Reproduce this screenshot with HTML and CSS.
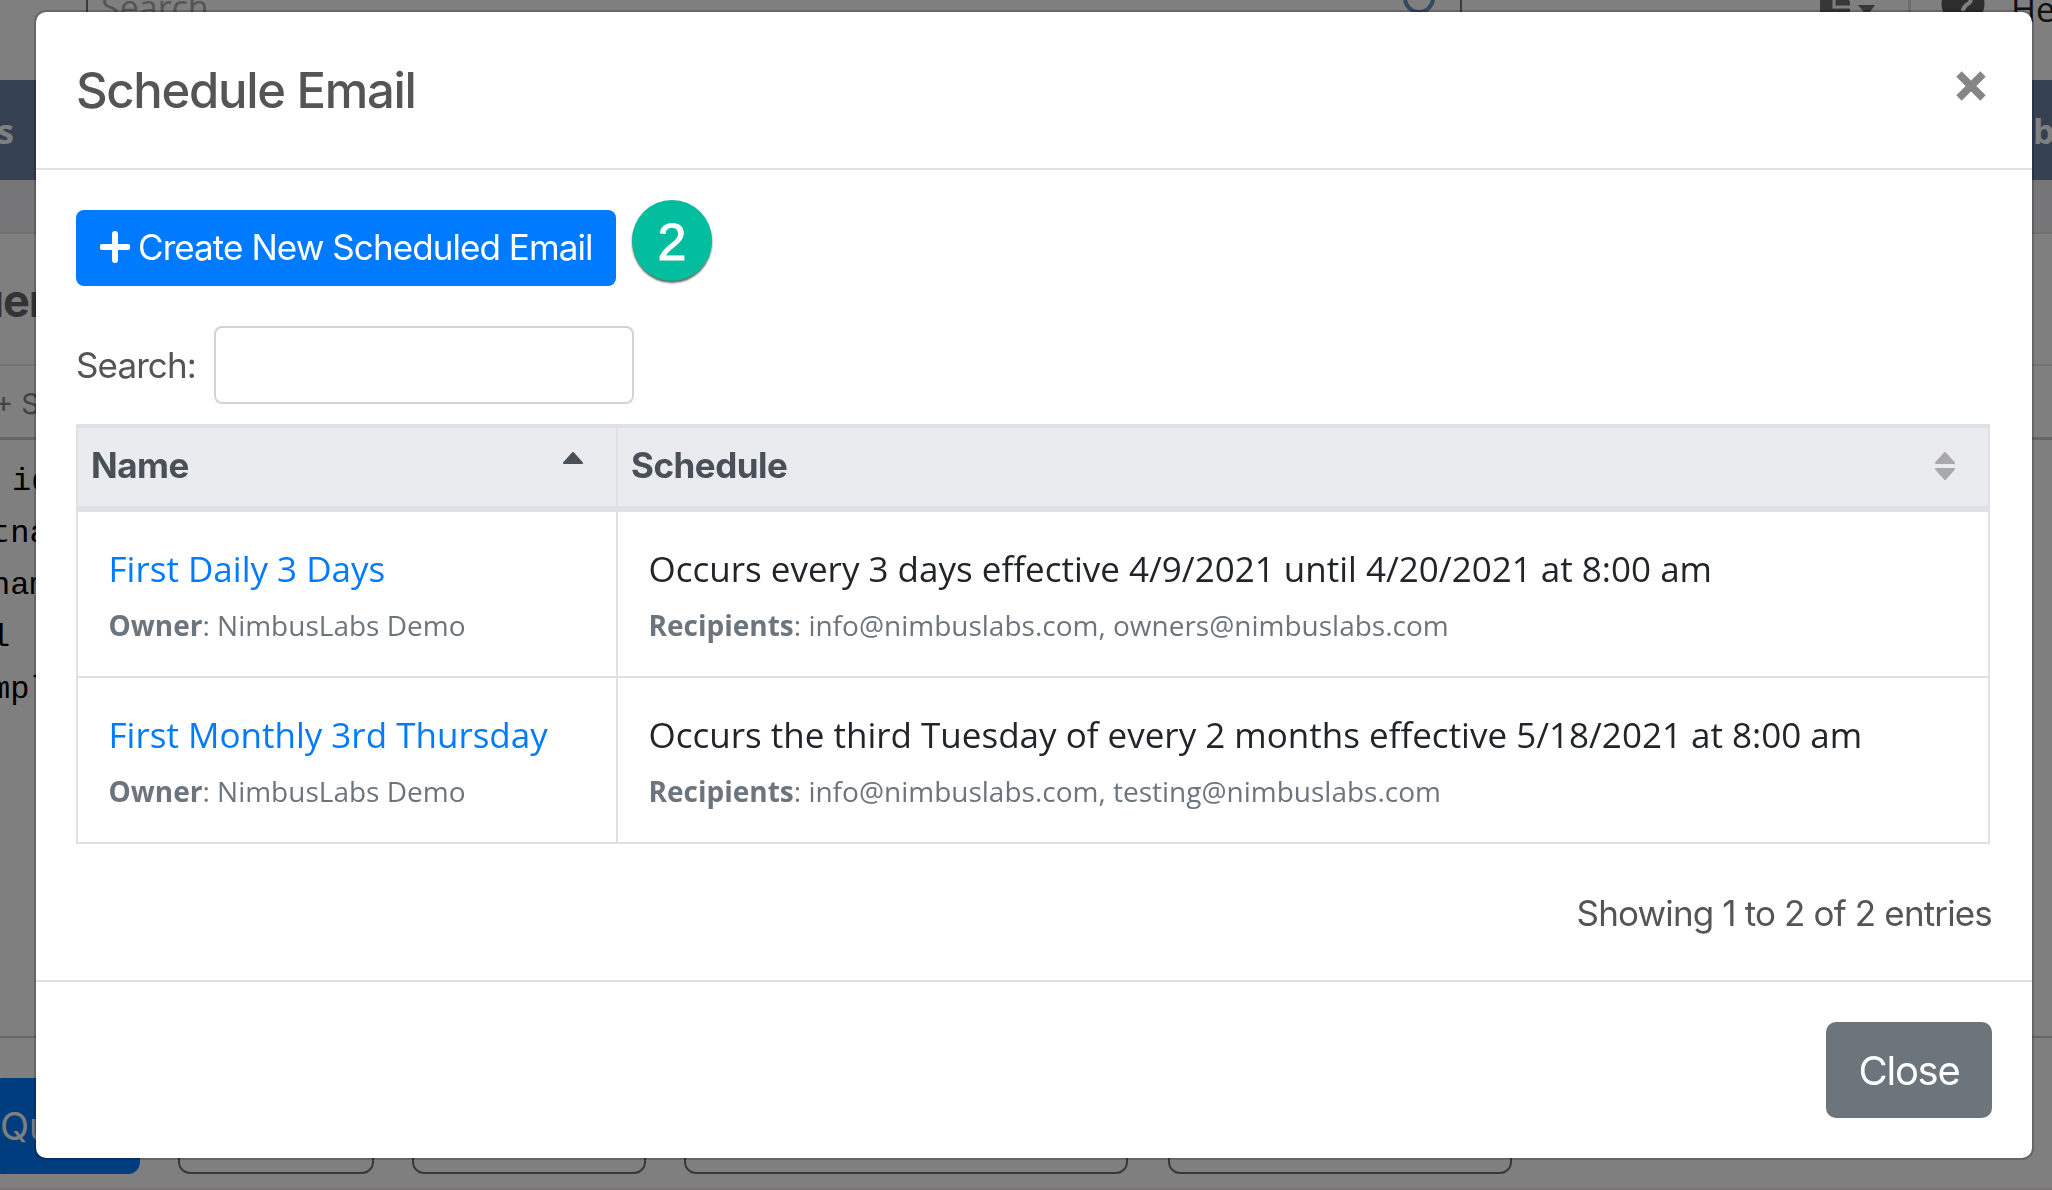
FILE: index.html
```
<!DOCTYPE html>
<html lang="en">
<head>
    <meta charset="UTF-8">
    <meta name="viewport" content="width=device-width, initial-scale=1.0">
    <title>Schedule Email</title>
    <link rel="stylesheet" href="styles.css">
</head>
<body>
    <div class="page">
        <div class="topbar">
            <div class="topbar-search">
                <span>Search</span>
                <svg class="search-icon" width="36" height="36" viewBox="0 0 36 36"><circle cx="18" cy="16" r="14" fill="none" stroke="#6c8ec0" stroke-width="4"/></svg>
            </div>
            <div class="topbar-tools">
                <svg width="58" height="40" viewBox="0 0 58 40"><path fill="#6e6e6e" d="M0 0h20l10 20v20H0z"/><path fill="none" stroke="#fff" stroke-width="3" d="M14 8v17h16"/><path fill="#6e6e6e" d="M38 23h17l-8 11z"/></svg>
                <span class="divider"></span>
                <svg width="44" height="44" viewBox="0 0 44 44"><circle cx="22" cy="22" r="21.500" fill="#5a5a5a"/><path fill="none" stroke="#fff" stroke-width="4" d="M15 17c0-9 15-9 15 0 0 6-8 5-8 12"/></svg>
                <span class="help">Help</span>
            </div>
        </div>
        <div class="navbar"><span>s</span><span class="nav-right">b</span></div>
        <div class="strip"></div>
        <div class="page-title">uery</div>
        <div class="page-tabs">+ S</div>
        <div class="editor">
            <div class="line indent">id</div>
            <div class="line">tname</div>
            <div class="line">name</div>
            <div class="line">l</div>
            <div class="line">mple</div>
        </div>
        <div class="page-actions">
            <div class="action run">Query</div>
            <div class="action w1"></div>
            <div class="action w2"></div>
            <div class="action w3"></div>
            <div class="action w4"></div>
        </div>
    </div>

    <div class="backdrop">
        <div class="modal">
            <div class="modal-header">
                <h5>Schedule Email</h5>
                <svg class="close-icon" width="30" height="30" viewBox="0 0 30 30"><path d="M3 3l24 24M27 3L3 27" stroke="#858585" stroke-width="7.500"/></svg>
            </div>
            <div class="modal-body">
                <div class="toolbar">
                    <button class="btn-create">
                        <svg width="30" height="32" viewBox="0 0 30 32"><path d="M15 3v26M2.500 16h25" stroke="#fff" stroke-width="6" stroke-linecap="round"/></svg>
                        <span>Create New Scheduled Email</span>
                    </button>
                    <span class="step">2</span>
                </div>
                <div class="filter">
                    <label for="search">Search:</label>
                    <input type="text" id="search">
                </div>
                <table>
                    <thead>
                        <tr>
                            <th class="col-name"><div class="th"><span class="th-text">Name</span>
                                <svg class="sort" width="20" height="28" viewBox="0 0 20 28"><path d="M10 1L19 11H1z" fill="#495057" stroke="#495057" stroke-width="2" stroke-linejoin="round"/></svg></div></th>
                            <th><div class="th"><span class="th-text">Schedule</span>
                                <svg class="sort" width="20" height="28" viewBox="0 0 20 28"><path d="M10 1L19 11H1zM1 17h18L10 27z" fill="#a9a9a9" stroke="#a9a9a9" stroke-width="2" stroke-linejoin="round"/></svg></div></th>
                        </tr>
                    </thead>
                    <tbody>
                        <tr>
                            <td>
                                <a class="name">First Daily 3 Days</a>
                                <p class="meta"><b>Owner</b>: NimbusLabs Demo</p>
                            </td>
                            <td>
                                <p class="when">Occurs every 3 days effective 4/9/2021 until 4/20/2021 at 8:00 am</p>
                                <p class="meta"><b>Recipients</b>: info@nimbuslabs.com, owners@nimbuslabs.com</p>
                            </td>
                        </tr>
                        <tr>
                            <td>
                                <a class="name">First Monthly 3rd Thursday</a>
                                <p class="meta"><b>Owner</b>: NimbusLabs Demo</p>
                            </td>
                            <td>
                                <p class="when">Occurs the third Tuesday of every 2 months effective 5/18/2021 at 8:00 am</p>
                                <p class="meta"><b>Recipients</b>: info@nimbuslabs.com, testing@nimbuslabs.com</p>
                            </td>
                        </tr>
                    </tbody>
                </table>
                <div class="info">Showing 1 to 2 of 2 entries</div>
            </div>
            <div class="modal-footer">
                <button class="btn-close">Close</button>
            </div>
        </div>
    </div>
</body>
</html>
```
FILE: styles.css
```
* {
    box-sizing: border-box;
}

body {
    margin: 0;
    height: 1190px;
    overflow: hidden;
    font-family: Inter, sans-serif;
    color: #555;
}

p, h5 {
    margin: 0;
}

svg {
    display: block;
    flex: none;
}

button {
    border: none;
    font-family: inherit;
    color: #fff;
}

/* page behind the modal */
.page {
    height: 1190px;
    overflow: hidden;
    background-color: #fff;
    border-bottom: 2px solid #f3ecef;
}

.topbar {
    height: 80px;
    display: flex;
    align-items: flex-start;
    padding-left: 86px;
    font-family: "Open Sans", sans-serif;
}

.topbar-search {
    flex: none;
    width: 1376px;
    height: 40px;
    display: flex;
    justify-content: space-between;
    padding: 0 23px 0 13px;
    border-left: 2px solid #777;
    border-right: 2px solid #777;
    font-size: 34px;
    line-height: 40px;
    color: #aaa;
}

.topbar-search span {
    margin-top: -13px;
}

.search-icon {
    margin-top: -18px;
}

.topbar-tools {
    flex: 1;
    display: flex;
    padding-left: 358px;
    color: #222;
    font-size: 34px;
    line-height: 40px;
}

.topbar-tools svg {
    margin-top: -18px;
}

.divider {
    width: 3px;
    height: 40px;
    margin: 0 30px;
    background-color: #ddd;
}

.help {
    margin: -11px 0 0 26px;
}

.navbar {
    height: 100px;
    display: flex;
    justify-content: space-between;
    background-color: #6a80a2;
    color: #fff;
    font: bold 34px/102px "Open Sans", sans-serif;
    white-space: nowrap;
}

.navbar span {
    margin-left: -3px;
}

.navbar .nav-right {
    width: 19px;
}

.strip {
    height: 54px;
    background-color: #ececf2;
    border-bottom: 2px solid #e3e3e6;
}

.page-title {
    height: 132px;
    padding-top: 42px;
    margin-left: -24px;
    border-bottom: 2px solid #e6e6e6;
    font-size: 45px;
    font-weight: 700;
    line-height: 50px;
    letter-spacing: -1px;
    color: #666;
}

.page-tabs {
    height: 74px;
    border-bottom: 3px solid #ccc;
    font-size: 29px;
    line-height: 76px;
    color: #888;
    margin-left: -6px;
}

.editor {
    height: 598px;
    padding-top: 16px;
    border-bottom: 2px solid #ccc;
    font: 32px/52px "Liberation Mono", monospace;
    color: #000;
}

.line {
    margin-left: -9px;
}

.line.indent {
    padding-left: 21px;
}

.page-actions {
    display: flex;
    padding-top: 40px;
}

.action {
    height: 96px;
    border: 2px solid #6c757d;
    border-radius: 12px;
}

.run {
    width: 150px;
    margin: 0 38px 0 -10px;
    padding-left: 10px;
    border: none;
    background-color: #007bff;
    color: #fff;
    font-size: 38px;
    line-height: 96px;
}

.w1 {
    width: 196px;
    margin-right: 38px;
}

.w2 {
    width: 234px;
    margin-right: 38px;
}

.w3 {
    width: 444px;
    margin-right: 40px;
}

.w4 {
    width: 344px;
}

/* modal */
.backdrop {
    position: fixed;
    inset: 0;
    padding: 10px 18px 0 34px;
    background-color: rgba(0, 0, 0, 0.5);
}

.modal {
    width: 2000px;
    height: 1150px;
    display: flex;
    flex-direction: column;
    background-color: #fff;
    background-clip: padding-box;
    border: 2px solid rgba(0, 0, 0, 0.2);
    border-radius: 12px;
}

.modal-header {
    height: 158px;
    display: flex;
    justify-content: space-between;
    padding: 50px 46px 0 40px;
    border-bottom: 2px solid #dee2e6;
}

.modal-header h5 {
    font-size: 49px;
    font-weight: 500;
    line-height: 58px;
    letter-spacing: -1.300px;
}

.close-icon {
    margin-top: 9px;
}

.modal-body {
    height: 810px;
    padding: 30px 40px 0;
}

.toolbar {
    height: 84px;
    display: flex;
    align-items: flex-start;
}

.btn-create {
    width: 540px;
    height: 76px;
    margin-top: 10px;
    padding: 0 24px 2px;
    display: flex;
    align-items: center;
    gap: 8px;
    border-radius: 8px;
    background-color: #007bff;
    font-size: 35px;
    letter-spacing: -0.930px;
    white-space: nowrap;
}

.step {
    width: 80px;
    height: 81px;
    margin-left: 16px;
    border-radius: 50%;
    background-color: #03bd9f;
    box-shadow: 0 2px 2px rgba(0, 0, 0, 0.6);
    color: #fff;
    font: 52px/84px "Liberation Sans", sans-serif;
    -webkit-text-stroke: 1px #fff;
    text-align: center;
}

.filter {
    display: flex;
    align-items: center;
    margin-top: 42px;
    font-size: 35px;
    letter-spacing: -0.900px;
}

.filter label {
    width: 138px;
}

.filter input {
    width: 420px;
    height: 78px;
    border: 2px solid #ced4da;
    border-radius: 8px;
    background-color: #fff;
}

table {
    width: 1914px;
    margin-top: 20px;
    border-collapse: separate;
    border-spacing: 0;
    table-layout: fixed;
    border: solid #dee2e6;
    border-width: 2px 0 0 2px;
}

th, td {
    padding: 0;
    text-align: left;
    vertical-align: top;
    border: solid #dee2e6;
    border-width: 0 2px 2px 0;
}

th {
    height: 86px;
    border-width: 2px 2px 6px 0;
    background-color: #e9ebef;
    color: #495057;
    font-size: 35px;
    letter-spacing: -0.500px;
}

.col-name {
    width: 540px;
}

.th {
    display: flex;
    justify-content: space-between;
    padding: 14px 33px 0 13px;
}

.th-text {
    line-height: 47px;
}

.sort {
    margin-top: 10px;
}

td {
    height: 166px;
    padding: 31px 0 0 30.500px;
    font-family: "Open Sans", sans-serif;
    white-space: nowrap;
}

.name, .when {
    display: block;
    font-size: 35px;
    line-height: 52px;
}

.name {
    color: #007bff;
}

.when {
    color: #212529;
}

.meta {
    margin-top: 9px;
    font-size: 28px;
    line-height: 42px;
    color: #6c757d;
}

.info {
    margin-top: 44px;
    text-align: right;
    font-size: 35px;
    line-height: 50px;
    letter-spacing: -0.850px;
}

.modal-footer {
    flex: 1;
    display: flex;
    justify-content: flex-end;
    padding: 40px 40px 0;
    border-top: 2px solid #dee2e6;
}

.btn-close {
    width: 166px;
    height: 96px;
    border-radius: 10px;
    background-color: #6c757b;
    font-size: 40px;
    letter-spacing: -1.300px;
}
```
